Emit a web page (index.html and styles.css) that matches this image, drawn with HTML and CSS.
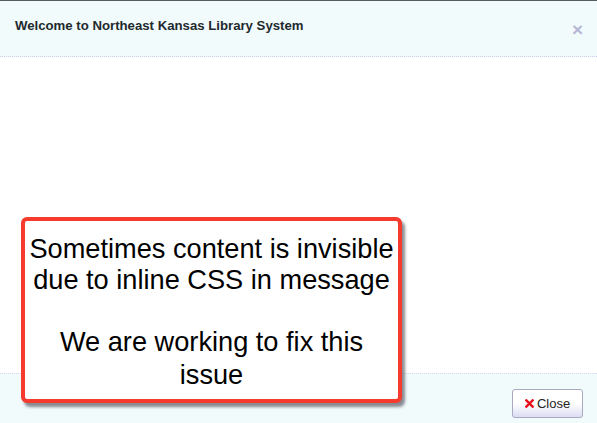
FILE: index.html
```html
<!DOCTYPE html>
<html>
<head>
<meta charset="utf-8">
<link rel="stylesheet" href="styles.css">
</head>
<body>
<div class="modal">
  <div class="modal-header">
    <h3 class="title">Welcome to Northeast Kansas Library System</h3>
    <span class="dismiss">&times;</span>
  </div>
  <div class="modal-body"></div>
  <div class="modal-footer">
    <button class="btn"><svg class="btn-icon" width="9" height="9" viewBox="0 0 10 10"><path d="M1.5 1.5 L8.5 8.5 M8.5 1.5 L1.5 8.5" stroke="#e8101a" stroke-width="2.6" stroke-linecap="square"/></svg>Close</button>
  </div>
  <div class="callout">
    <p class="line-a">Sometimes content is invisible<br>due to inline CSS in message</p>
    <p class="line-b">We are working to fix this<br>issue</p>
  </div>
</div>
</body>
</html>
```
FILE: styles.css
```css
html, body {
  margin: 0;
  padding: 0;
  background: #ffffff;
}
.modal {
  position: relative;
  width: 597px;
  height: 423px;
  display: flex;
  flex-direction: column;
  font-family: "Liberation Sans", Arial, sans-serif;
  border-top: 1px solid #555b5e;
  box-sizing: border-box;
}
.modal-header {
  height: 55px;
  background: #f1fbfc;
  border-bottom: 1px dotted #cfcfee;
  display: flex;
  align-items: flex-start;
  justify-content: space-between;
  padding: 0 14px 0 15px;
}
.title {
  margin: 17px 0 0 0;
  font-size: 13.2px;
  font-weight: bold;
  color: #1f2a2e;
  line-height: 15px;
}
.dismiss {
  margin-top: 19px;
  font-size: 19px;
  line-height: 20px;
  color: #b7b7d6;
  font-weight: bold;
}
.modal-body {
  flex: 1;
  background: #ffffff;
}
.modal-footer {
  height: 50px;
  box-sizing: border-box;
  background: #f1fbfc;
  border-top: 1px dotted #d4d4ec;
  display: flex;
  justify-content: flex-end;
  align-items: flex-start;
  padding: 15px 14px 0 0;
}
.btn {
  width: 71px;
  height: 29px;
  border: 1px solid #a9a9c0;
  border-radius: 3px;
  background: linear-gradient(#ffffff 0%, #ffffff 50%, #dcdcf4 100%);
  font-family: "Liberation Sans", Arial, sans-serif;
  font-size: 13px;
  color: #222;
  display: flex;
  align-items: center;
  justify-content: center;
  gap: 3px;
  padding: 0;
}
.btn-icon {
  display: block;
}
.callout {
  position: absolute;
  left: 21px;
  top: 216px;
  width: 381px;
  height: 186px;
  box-sizing: border-box;
  border: 4px solid #f63a2e;
  border-radius: 6px;
  background: #ffffff;
  box-shadow: 3px 4px 3px rgba(90, 90, 100, 0.7);
  text-align: center;
  font-size: 27.2px;
  color: #000;
  padding: 12px 0 0 0;
  white-space: nowrap;
}
.callout .line-a {
  margin: 0 0 30px 0;
  line-height: 31px;
}
.callout .line-b {
  margin: 0;
  line-height: 33px;
}
```
